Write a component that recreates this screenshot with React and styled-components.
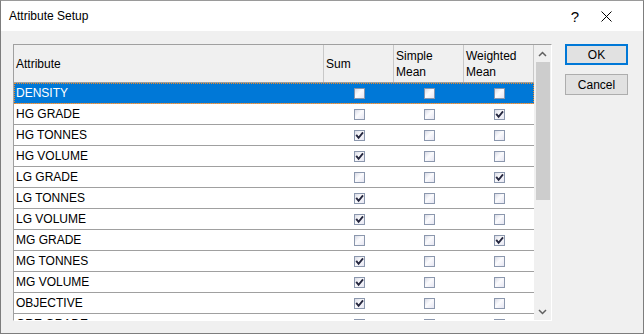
import React from 'react';
import styled, { createGlobalStyle } from 'styled-components';

const GlobalStyle = createGlobalStyle`
  body {
    margin: 0;
    font-family: "Liberation Sans", Arial, sans-serif;
    font-size: 12px;
    color: #000;
  }
`;

const rows = [
  { name: 'DENSITY', sum: false, simple: false, weighted: false, selected: true },
  { name: 'HG GRADE', sum: false, simple: false, weighted: true },
  { name: 'HG TONNES', sum: true, simple: false, weighted: false },
  { name: 'HG VOLUME', sum: true, simple: false, weighted: false },
  { name: 'LG GRADE', sum: false, simple: false, weighted: true },
  { name: 'LG TONNES', sum: true, simple: false, weighted: false },
  { name: 'LG VOLUME', sum: true, simple: false, weighted: false },
  { name: 'MG GRADE', sum: false, simple: false, weighted: true },
  { name: 'MG TONNES', sum: true, simple: false, weighted: false },
  { name: 'MG VOLUME', sum: true, simple: false, weighted: false },
  { name: 'OBJECTIVE', sum: true, simple: false, weighted: false },
  { name: 'ORE GRADE', sum: false, simple: false, weighted: true },
];

export default function App() {
  return (
    <>
      <GlobalStyle />
      <Window>
        <TitleBar>
          <Title>Attribute Setup</Title>
          <TitleButtons>
            <HelpButton>?</HelpButton>
            <CloseButton>
              <svg width="11" height="11" viewBox="0 0 11 11">
                <path d="M0.5 0.5 L10.5 10.5 M10.5 0.5 L0.5 10.5" stroke="#000" strokeWidth="1" />
              </svg>
            </CloseButton>
          </TitleButtons>
        </TitleBar>
        <Body>
          <Grid>
            <Table>
              <HeaderRow>
                <HeaderCell>Attribute</HeaderCell>
                <HeaderCell>Sum</HeaderCell>
                <HeaderCell>Simple<br />Mean</HeaderCell>
                <HeaderCell>Weighted<br />Mean</HeaderCell>
              </HeaderRow>
              <RowList>
                {rows.map((r) => (
                  <Row key={r.name} $selected={r.selected}>
                    <NameCell>{r.name}</NameCell>
                    <CheckCell><CheckBox checked={r.sum} /></CheckCell>
                    <CheckCell><CheckBox checked={r.simple} /></CheckCell>
                    <CheckCell><CheckBox checked={r.weighted} /></CheckCell>
                  </Row>
                ))}
              </RowList>
            </Table>
            <ScrollBar>
              <ArrowButton>
                <svg width="9" height="6" viewBox="0 0 9 6">
                  <path d="M1 5 L4.5 1.5 L8 5" stroke="#606060" strokeWidth="1.5" fill="none" />
                </svg>
              </ArrowButton>
              <Thumb />
              <Track />
              <ArrowButton>
                <svg width="9" height="6" viewBox="0 0 9 6">
                  <path d="M1 1 L4.5 4.5 L8 1" stroke="#606060" strokeWidth="1.5" fill="none" />
                </svg>
              </ArrowButton>
            </ScrollBar>
          </Grid>
          <ButtonColumn>
            <DialogButton $primary>OK</DialogButton>
            <DialogButton>Cancel</DialogButton>
          </ButtonColumn>
        </Body>
      </Window>
    </>
  );
}

function CheckBox({ checked }) {
  return (
    <Box>
      {checked && (
        <svg width="9" height="9" viewBox="0 0 9 9">
          <path d="M1.2 3.8 L3.6 6.8 L8 1.4" stroke="#25273f" strokeWidth="1.9" fill="none" />
        </svg>
      )}
    </Box>
  );
}

const Window = styled.div`
  width: 644px;
  height: 334px;
  box-sizing: border-box;
  border: 1px solid #7d7d7d;
  border-top-color: #9a9a9a;
  background: #f0f0f0;
  display: flex;
  flex-direction: column;
  overflow: hidden;
`;

const TitleBar = styled.div`
  height: 30px;
  flex: none;
  background: #fff;
  display: flex;
  align-items: center;
  padding-left: 8px;
`;

const Title = styled.div`
  font-size: 12px;
  padding-bottom: 1px;
`;

const TitleButtons = styled.div`
  margin-left: auto;
  display: flex;
  align-items: center;
  height: 100%;
  padding-right: 21px;
`;

const HelpButton = styled.div`
  width: 30px;
  text-align: center;
  font-size: 15px;
`;

const CloseButton = styled.div`
  width: 32px;
  display: flex;
  justify-content: center;
`;

const Body = styled.div`
  flex: 1;
  display: flex;
  align-items: flex-start;
  padding: 13px 0 0 12px;
`;

const Grid = styled.div`
  width: 539px;
  height: 277px;
  box-sizing: border-box;
  border: 1px solid #fff;
  border-top-color: #a0a0a0;
  border-left-color: #a0a0a0;
  display: flex;
`;

const Table = styled.div`
  width: 520px;
  display: flex;
  flex-direction: column;
  background: #fff;
`;

const columns = '310px 70px 70px 70px';

const HeaderRow = styled.div`
  display: grid;
  grid-template-columns: ${columns};
  height: 38px;
  flex: none;
  box-sizing: border-box;
  border-bottom: 1px solid #a0a0a0;
  background: #f0f0f0;
`;

const HeaderCell = styled.div`
  display: flex;
  align-items: center;
  padding-left: 2px;
  line-height: 16px;
  border-right: 1px solid #c8c8c8;
`;

const RowList = styled.div`
  flex: 1;
  overflow: hidden;
`;

const Row = styled.div`
  display: grid;
  grid-template-columns: ${columns};
  height: 21px;
  box-sizing: border-box;
  border-bottom: 1px solid #a0a0a0;
  background: ${(p) => (p.$selected ? '#0078d7' : '#fff')};
  color: ${(p) => (p.$selected ? '#fff' : '#000')};
  outline: ${(p) => (p.$selected ? '1px dotted #f08a24' : 'none')};
  outline-offset: -1px;
`;

const NameCell = styled.div`
  display: flex;
  align-items: center;
  padding-left: 2px;
`;

const CheckCell = styled.div`
  display: flex;
  align-items: center;
  justify-content: center;
`;

const Box = styled.span`
  width: 11px;
  height: 11px;
  box-sizing: border-box;
  border: 1px solid #8b97ad;
  background: linear-gradient(135deg, #d9dbe6 0%, #fbfbfd 45%, #e6e6f2 100%);
  display: flex;
  align-items: center;
  justify-content: center;
`;

const ScrollBar = styled.div`
  width: 17px;
  background: #f0f0f0;
  display: flex;
  flex-direction: column;
`;

const ArrowButton = styled.div`
  height: 17px;
  flex: none;
  display: flex;
  align-items: center;
  justify-content: center;
`;

const Thumb = styled.div`
  height: 138px;
  margin: 0 1px 0 2px;
  background: #cdcdcd;
`;

const Track = styled.div`
  flex: 1;
`;

const ButtonColumn = styled.div`
  margin-left: 13px;
  display: flex;
  flex-direction: column;
  gap: 9px;
`;

const DialogButton = styled.div`
  width: 63px;
  height: 21px;
  box-sizing: border-box;
  background: #e1e1e1;
  border: ${(p) => (p.$primary ? '2px solid #0078d7' : '1px solid #adadad')};
  display: flex;
  align-items: center;
  justify-content: center;
  font-size: 12px;
`;
